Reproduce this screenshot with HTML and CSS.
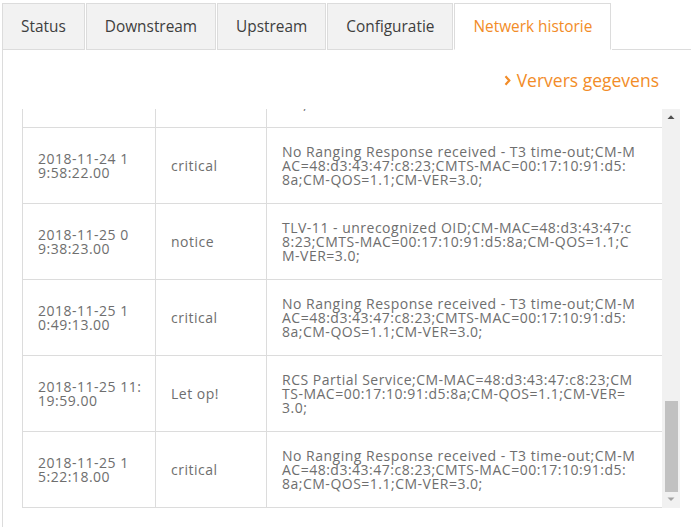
FILE: index.html
```html
<!DOCTYPE html>
<html lang="nl">
<head>
<meta charset="utf-8">
<title>Netwerk historie</title>
<link rel="stylesheet" href="styles.css">
</head>
<body>
<div class="page">
  <nav class="tabs">
    <a class="tab">Status</a>
    <a class="tab">Downstream</a>
    <a class="tab">Upstream</a>
    <a class="tab">Configuratie</a>
    <a class="tab active">Netwerk historie</a>
    <span class="tab-fill"></span>
  </nav>
  <section class="panel">
    <div class="actions">
      <a class="refresh"><svg class="chev" width="7" height="11" viewBox="0 0 7 11"><polyline points="1.5,1.2 5.3,5.5 1.5,9.8" fill="none" stroke="#f28c28" stroke-width="2.2"/></svg>Ververs gegevens</a>
    </div>
    <div class="log-frame">
      <div class="scroll" id="log">
        <table class="log">
          <colgroup><col class="c-time"><col class="c-prio"><col class="c-msg"></colgroup>
          <thead>
            <tr><th>Tijd</th><th>Prioriteit</th><th>Omschrijving</th></tr>
          </thead>
          <tbody>
            <tr><td>2018-11-20 0<br>8:12:40.00</td><td>critical</td><td>No Ranging Response received - T3 time-out;CM-M<br>AC=48:d3:43:47:c8:23;CMTS-MAC=00:17:10:91:d5:<br>8a;CM-QOS=1.1;CM-VER=3.0;</td></tr>
            <tr><td>2018-11-20 1<br>2:31:05.00</td><td>notice</td><td>TLV-11 - unrecognized OID;CM-MAC=48:d3:43:47:c<br>8:23;CMTS-MAC=00:17:10:91:d5:8a;CM-QOS=1.1;C<br>M-VER=3.0;</td></tr>
            <tr><td>2018-11-20 1<br>7:44:51.00</td><td>critical</td><td>No Ranging Response received - T3 time-out;CM-M<br>AC=48:d3:43:47:c8:23;CMTS-MAC=00:17:10:91:d5:<br>8a;CM-QOS=1.1;CM-VER=3.0;</td></tr>
            <tr><td>2018-11-21 0<br>2:09:17.00</td><td>Let op!</td><td>RCS Partial Service;CM-MAC=48:d3:43:47:c8:23;CM<br>TS-MAC=00:17:10:91:d5:8a;CM-QOS=1.1;CM-VER=<br>3.0;</td></tr>
            <tr><td>2018-11-21 0<br>6:58:33.00</td><td>critical</td><td>No Ranging Response received - T3 time-out;CM-M<br>AC=48:d3:43:47:c8:23;CMTS-MAC=00:17:10:91:d5:<br>8a;CM-QOS=1.1;CM-VER=3.0;</td></tr>
            <tr><td>2018-11-21 1<br>3:20:02.00</td><td>notice</td><td>TLV-11 - unrecognized OID;CM-MAC=48:d3:43:47:c<br>8:23;CMTS-MAC=00:17:10:91:d5:8a;CM-QOS=1.1;C<br>M-VER=3.0;</td></tr>
            <tr><td>2018-11-21 2<br>1:47:39.00</td><td>critical</td><td>No Ranging Response received - T3 time-out;CM-M<br>AC=48:d3:43:47:c8:23;CMTS-MAC=00:17:10:91:d5:<br>8a;CM-QOS=1.1;CM-VER=3.0;</td></tr>
            <tr><td>2018-11-22 0<br>4:15:26.00</td><td>Let op!</td><td>RCS Partial Service;CM-MAC=48:d3:43:47:c8:23;CM<br>TS-MAC=00:17:10:91:d5:8a;CM-QOS=1.1;CM-VER=<br>3.0;</td></tr>
            <tr><td>2018-11-22 0<br>9:03:44.00</td><td>critical</td><td>No Ranging Response received - T3 time-out;CM-M<br>AC=48:d3:43:47:c8:23;CMTS-MAC=00:17:10:91:d5:<br>8a;CM-QOS=1.1;CM-VER=3.0;</td></tr>
            <tr><td>2018-11-22 1<br>4:36:12.00</td><td>notice</td><td>TLV-11 - unrecognized OID;CM-MAC=48:d3:43:47:c<br>8:23;CMTS-MAC=00:17:10:91:d5:8a;CM-QOS=1.1;C<br>M-VER=3.0;</td></tr>
            <tr><td>2018-11-22 2<br>0:52:08.00</td><td>critical</td><td>No Ranging Response received - T3 time-out;CM-M<br>AC=48:d3:43:47:c8:23;CMTS-MAC=00:17:10:91:d5:<br>8a;CM-QOS=1.1;CM-VER=3.0;</td></tr>
            <tr><td>2018-11-23 0<br>1:27:55.00</td><td>Let op!</td><td>RCS Partial Service;CM-MAC=48:d3:43:47:c8:23;CM<br>TS-MAC=00:17:10:91:d5:8a;CM-QOS=1.1;CM-VER=<br>3.0;</td></tr>
            <tr><td>2018-11-23 0<br>7:49:30.00</td><td>critical</td><td>No Ranging Response received - T3 time-out;CM-M<br>AC=48:d3:43:47:c8:23;CMTS-MAC=00:17:10:91:d5:<br>8a;CM-QOS=1.1;CM-VER=3.0;</td></tr>
            <tr><td>2018-11-23 1<br>5:11:47.00</td><td>notice</td><td>TLV-11 - unrecognized OID;CM-MAC=48:d3:43:47:c<br>8:23;CMTS-MAC=00:17:10:91:d5:8a;CM-QOS=1.1;C<br>M-VER=3.0;</td></tr>
            <tr><td>2018-11-24 0<br>3:38:19.00</td><td>critical</td><td>No Ranging Response received - T3 time-out;CM-M<br>AC=48:d3:43:47:c8:23;CMTS-MAC=00:17:10:91:d5:<br>8a;CM-QOS=1.1;CM-VER=3.0;</td></tr>
            <tr><td>2018-11-24 1<br>6:05:41.00</td><td>Let op!</td><td>RCS Partial Service;CM-MAC=48:d3:43:47:c8:23;CM<br>TS-MAC=00:17:10:91:d5:8a;CM-QOS=1.1;CM-VER=<br>3.0;</td></tr>
            <tr><td>2018-11-24 1<br>9:58:22.00</td><td>critical</td><td>No Ranging Response received - T3 time-out;CM-M<br>AC=48:d3:43:47:c8:23;CMTS-MAC=00:17:10:91:d5:<br>8a;CM-QOS=1.1;CM-VER=3.0;</td></tr>
            <tr><td>2018-11-25 0<br>9:38:23.00</td><td>notice</td><td>TLV-11 - unrecognized OID;CM-MAC=48:d3:43:47:c<br>8:23;CMTS-MAC=00:17:10:91:d5:8a;CM-QOS=1.1;C<br>M-VER=3.0;</td></tr>
            <tr><td>2018-11-25 1<br>0:49:13.00</td><td>critical</td><td>No Ranging Response received - T3 time-out;CM-M<br>AC=48:d3:43:47:c8:23;CMTS-MAC=00:17:10:91:d5:<br>8a;CM-QOS=1.1;CM-VER=3.0;</td></tr>
            <tr><td>2018-11-25 11:<br>19:59.00</td><td>Let op!</td><td>RCS Partial Service;CM-MAC=48:d3:43:47:c8:23;CM<br>TS-MAC=00:17:10:91:d5:8a;CM-QOS=1.1;CM-VER=<br>3.0;</td></tr>
            <tr><td>2018-11-25 1<br>5:22:18.00</td><td>critical</td><td>No Ranging Response received - T3 time-out;CM-M<br>AC=48:d3:43:47:c8:23;CMTS-MAC=00:17:10:91:d5:<br>8a;CM-QOS=1.1;CM-VER=3.0;</td></tr>
          </tbody>
        </table>
      </div>
      <div class="scrollbar" aria-hidden="true">
        <div class="sb-btn"><svg width="18" height="17" viewBox="0 0 18 17"><polygon points="5.5,10 12.5,10 9,6.3" fill="#505050"/></svg></div>
        <div class="sb-track"><div class="sb-thumb"></div></div>
        <div class="sb-btn sb-btn-down"><svg width="18" height="16" viewBox="0 0 18 16"><polygon points="5.5,5.5 12.5,5.5 9,9" fill="#a3a3a3"/></svg></div>
      </div>
    </div>
  </section>
</div>
<script src="script.js"></script>
</body>
</html>
```

FILE: styles.css
```css
html, body {
  margin: 0;
  padding: 0;
  height: 100%;
  overflow: hidden;
  background: #fff;
}

.page {
  padding: 3px 0 0 2px;
  font-family: "Open Sans", "Liberation Sans", sans-serif;
}

.tabs {
  display: flex;
  align-items: stretch;
  height: 47px;
}

.tab {
  display: flex;
  align-items: center;
  padding: 0 18px 1px 18px;
  margin-right: 1px;
  background: #f2f2f2;
  border: 1px solid #dcdcdc;
  color: #3e3e3e;
  font-size: 15.4px;
  cursor: pointer;
  white-space: nowrap;
}

.tab.active {
  background: #fff;
  color: #f28c28;
  border-bottom-color: #fff;
}

.tab-fill {
  flex: 1;
  border-bottom: 1px solid #dcdcdc;
}

.panel {
  border-left: 1px solid #dcdcdc;
  padding: 0 11px 0 19px;
  height: 480px;
}

.actions {
  display: flex;
  justify-content: flex-end;
  padding: 17px 21px 0 0;
  height: 42px;
}

.refresh {
  display: flex;
  align-items: center;
  gap: 6px;
  height: 26px;
  color: #f28c28;
  font-size: 17.5px;
  cursor: pointer;
}

.chev {
  display: block;
  margin-top: 1px;
}

.log-frame {
  display: flex;
  width: 658px;
  height: 399px;
}

.scroll {
  width: 640px;
  height: 399px;
  overflow-y: auto;
  overflow-x: hidden;
  scrollbar-width: none;
}

.scrollbar {
  width: 18px;
  height: 399px;
  background: #f1f1f1;
  display: flex;
  flex-direction: column;
}

.sb-btn {
  height: 17px;
  flex: none;
}

.sb-btn svg {
  display: block;
}

.sb-btn-down {
  height: 16px;
}

.sb-track {
  flex: 1;
  display: flex;
  flex-direction: column;
  justify-content: flex-end;
}

.sb-thumb {
  height: 91px;
  margin: 0 2px 0 3px;
  background: #c1c1c1;
}

.log {
  width: 640px;
  border-collapse: collapse;
  table-layout: fixed;
  font-family: "Open Sans", "Liberation Sans", sans-serif;
  font-size: 14px;
  line-height: 14px;
  letter-spacing: 0.5px;
  color: #6e6e6e;
}

.c-time { width: 133px; }
.c-prio { width: 111px; }
.c-msg { width: 396px; }

.log th,
.log td {
  border: 1px solid #dcdcdc;
  padding: 0 8px 0 15px;
  height: 75px;
  text-align: left;
  vertical-align: middle;
  white-space: nowrap;
}

.log th {
  height: 45px;
  font-weight: 600;
  color: #4a4a4a;
}
```

FILE: script.js
```js
var log = document.getElementById('log');
log.scrollTop = log.scrollHeight;
```
